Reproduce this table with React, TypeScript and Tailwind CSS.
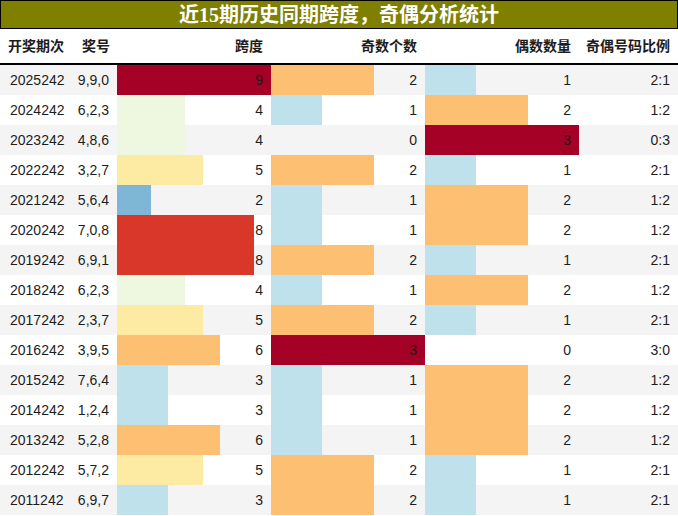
/**
 * 近15期历史同期跨度 / 奇偶分析统计 table with inline bars.
 */

type Row = {
  issue: string
  nums: string
  span: number
  odd: number
  even: number
}

const rows: Row[] = [
  { issue: '2025242', nums: '9,9,0', span: 9, odd: 2, even: 1 },
  { issue: '2024242', nums: '6,2,3', span: 4, odd: 1, even: 2 },
  { issue: '2023242', nums: '4,8,6', span: 4, odd: 0, even: 3 },
  { issue: '2022242', nums: '3,2,7', span: 5, odd: 2, even: 1 },
  { issue: '2021242', nums: '5,6,4', span: 2, odd: 1, even: 2 },
  { issue: '2020242', nums: '7,0,8', span: 8, odd: 1, even: 2 },
  { issue: '2019242', nums: '6,9,1', span: 8, odd: 2, even: 1 },
  { issue: '2018242', nums: '6,2,3', span: 4, odd: 1, even: 2 },
  { issue: '2017242', nums: '2,3,7', span: 5, odd: 2, even: 1 },
  { issue: '2016242', nums: '3,9,5', span: 6, odd: 3, even: 0 },
  { issue: '2015242', nums: '7,6,4', span: 3, odd: 1, even: 2 },
  { issue: '2014242', nums: '1,2,4', span: 3, odd: 1, even: 2 },
  { issue: '2013242', nums: '5,2,8', span: 6, odd: 1, even: 2 },
  { issue: '2012242', nums: '5,7,2', span: 5, odd: 2, even: 1 },
  { issue: '2011242', nums: '6,9,7', span: 3, odd: 2, even: 1 },
]

const spanColor: Record<number, string> = {
  9: 'bg-[#a50026]',
  8: 'bg-[#d9372a]',
  7: 'bg-[#f46d43]',
  6: 'bg-[#fdc072]',
  5: 'bg-[#feeba3]',
  4: 'bg-[#eef7df]',
  3: 'bg-[#bee1ec]',
  2: 'bg-[#7fb5d5]',
  1: 'bg-[#4575b4]',
  0: 'bg-transparent',
}

const countColor: Record<number, string> = {
  3: 'bg-[#a50026]',
  2: 'bg-[#fdc072]',
  1: 'bg-[#bee1ec]',
  0: 'bg-transparent',
}

function BarCell({ value, max, color }: { value: number; max: number; color: string }) {
  return (
    <div className="relative w-[154px] h-full flex items-center justify-end pr-2">
      <div
        className={`absolute left-0 top-0 bottom-0 ${color}`}
        style={{ width: `${(value / max) * 100}%` }}
      />
      <span className="relative">{value}</span>
    </div>
  )
}

export default function App() {
  return (
    <div
      className="w-[678px] h-[516px] bg-white text-[14px] text-[#1c1c1c] overflow-hidden"
      style={{ fontFamily: '"Liberation Sans", "Noto Sans CJK SC", sans-serif' }}
    >
      <div
        className="h-[29px] bg-[#808000] border border-black flex items-center justify-center text-white text-[20px] font-bold leading-none"
        style={{ fontFamily: '"Liberation Serif", "Noto Sans CJK SC", serif' }}
      >
        近15期历史同期跨度，奇偶分析统计
      </div>

      <div className="h-[36px] flex items-center font-bold border-b-2 border-black">
        <div className="w-[72px] pl-[8px]">开奖期次</div>
        <div className="w-[45px] text-right pr-[7px]">奖号</div>
        <div className="w-[154px] text-right pr-2">跨度</div>
        <div className="w-[154px] text-right pr-2">奇数个数</div>
        <div className="w-[154px] text-right pr-2">偶数数量</div>
        <div className="w-[99px] text-right pr-2">奇偶号码比例</div>
      </div>

      {rows.map((r, i) => (
        <div
          key={r.issue}
          className={`h-[30px] flex items-center ${i % 2 === 0 ? 'bg-[#f4f4f4]' : 'bg-white'}`}
        >
          <div className="w-[72px] pl-[10px]">{r.issue}</div>
          <div className="w-[45px] text-right pr-[8px]">{r.nums}</div>
          <BarCell value={r.span} max={9} color={spanColor[r.span]} />
          <BarCell value={r.odd} max={3} color={countColor[r.odd]} />
          <BarCell value={r.even} max={3} color={countColor[r.even]} />
          <div className="w-[99px] text-right pr-2">
            {r.odd}:{r.even}
          </div>
        </div>
      ))}
    </div>
  )
}
